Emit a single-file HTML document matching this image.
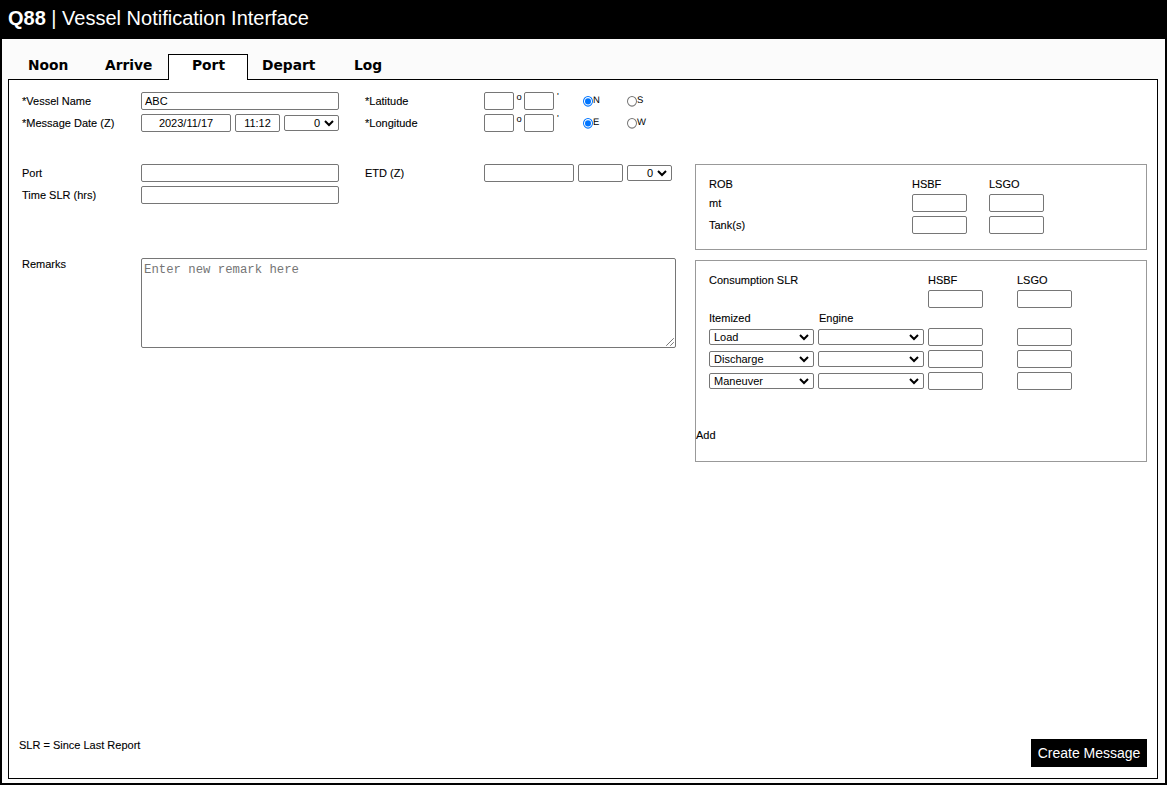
<!DOCTYPE html>
<html lang="en">
<head>
<meta charset="utf-8">
<title>Q88 | Vessel Notification Interface</title>
<style>
html,body{margin:0;padding:0;}
body{width:1167px;height:785px;background:#000;position:relative;overflow:hidden;
  font-family:"Liberation Sans",Arial,sans-serif;font-size:11px;color:#000;}
#hdr{position:absolute;left:8px;top:7px;color:#fff;font-size:20px;line-height:23px;white-space:nowrap;}
#hdr b{font-weight:bold;}
#wrap{position:absolute;left:2px;top:39px;width:1163px;height:744px;background:#fbfbfb;}
#panel{position:absolute;left:8px;top:79px;width:1150px;height:700px;background:#fff;border:1px solid #000;box-sizing:border-box;}
.tab{position:absolute;top:56px;height:18px;line-height:18px;font-family:"DejaVu Sans","Liberation Sans",sans-serif;font-weight:bold;font-size:13.8px;white-space:nowrap;}
#tabsel{position:absolute;left:168px;top:54px;width:80px;height:26px;background:#fff;border:1px solid #000;border-bottom:none;box-sizing:border-box;}
.l{position:absolute;font-size:11px;line-height:13px;white-space:nowrap;-webkit-text-stroke:0.1px #000;}
.d{position:absolute;font-size:9.33px;line-height:11px;white-space:nowrap;}
.s{position:absolute;text-rendering:geometricPrecision;font-size:9.5px;line-height:11px;white-space:nowrap;}
.t,.sel{position:absolute;box-sizing:border-box;border:1px solid #767676;border-radius:2px;background:#fff;margin:0;padding:1px 3px;
  font-family:"Liberation Sans",Arial,sans-serif;font-size:11px;line-height:14px;color:#000;height:18px;white-space:nowrap;overflow:hidden;}
.sel{padding:0;overflow:hidden;height:16px;margin-top:1px;}
.sel span{position:absolute;top:1px;font-size:11px;line-height:13px;}
.sel svg{position:absolute;right:3px;top:3px;width:12px;height:8px;}
.box{position:absolute;border:1px solid #999;box-sizing:border-box;}
.rad{position:absolute;width:10px;height:10.7px;}
#btn{position:absolute;left:1031px;top:739px;width:116px;height:28px;background:#000;color:#fff;font-size:14px;line-height:28px;text-align:center;white-space:nowrap;}
.ta{font-family:"Liberation Mono","DejaVu Sans Mono",monospace;font-size:12.3px;line-height:14px;height:90px;padding:4px 2px 2px 2px;color:#757575;}
</style>
</head>
<body>
<div id="hdr"><b>Q88</b> | Vessel Notification Interface</div>
<div id="wrap"></div>
<div id="panel"></div>
<div id="tabsel"></div>
<div class="tab" style="left:28px">Noon</div>
<div class="tab" style="left:105px">Arrive</div>
<div class="tab" style="left:192px">Port</div>
<div class="tab" style="left:262px">Depart</div>
<div class="tab" style="left:354px">Log</div>

<div class="l" style="left:22px;top:95px">*Vessel Name</div>
<div class="t" style="left:141px;top:92px;width:198px">ABC</div>
<div class="l" style="left:22px;top:117px">*Message Date (Z)</div>
<div class="t" style="left:141px;top:114px;width:90px;text-align:center">2023/11/17</div>
<div class="t" style="left:235px;top:114px;width:45px;text-align:center">11:12</div>
<div class="sel" style="left:284px;top:114px;width:55px"><span style="right:18px">0</span><svg viewBox="0 0 12 8"><path d="M2 2 L6 6 L10 2" fill="none" stroke="#000" stroke-width="2"/></svg></div>

<div class="l" style="left:365px;top:95px">*Latitude</div>
<div class="t" style="left:484px;top:92px;width:30px"></div>
<div class="d" style="left:516.5px;top:92px">o</div>
<div class="t" style="left:524px;top:92px;width:30px"></div>
<div class="d" style="left:557px;top:91px">'</div>
<svg class="rad" style="left:583px;top:96px" preserveAspectRatio="none" viewBox="0 0 10 10"><circle cx="5" cy="5" r="4.5" fill="#fff" stroke="#0075ff" stroke-width="1"/><circle cx="5" cy="5" r="3" fill="#0075ff"/></svg>
<div class="s" style="left:593px;top:95px">N</div>
<svg class="rad" style="left:627px;top:96px" preserveAspectRatio="none" viewBox="0 0 10 10"><circle cx="5" cy="5" r="4.5" fill="#fff" stroke="#767676" stroke-width="1"/></svg>
<div class="s" style="left:637px;top:95px">S</div>

<div class="l" style="left:365px;top:117px">*Longitude</div>
<div class="t" style="left:484px;top:114px;width:30px"></div>
<div class="d" style="left:516.5px;top:114px">o</div>
<div class="t" style="left:524px;top:114px;width:30px"></div>
<div class="d" style="left:557px;top:113px">'</div>
<svg class="rad" style="left:583px;top:118px" preserveAspectRatio="none" viewBox="0 0 10 10"><circle cx="5" cy="5" r="4.5" fill="#fff" stroke="#0075ff" stroke-width="1"/><circle cx="5" cy="5" r="3" fill="#0075ff"/></svg>
<div class="s" style="left:593px;top:117px">E</div>
<svg class="rad" style="left:627px;top:118px" preserveAspectRatio="none" viewBox="0 0 10 10"><circle cx="5" cy="5" r="4.5" fill="#fff" stroke="#767676" stroke-width="1"/></svg>
<div class="s" style="left:637px;top:117px">W</div>

<div class="l" style="left:22px;top:167px">Port</div>
<div class="t" style="left:141px;top:164px;width:198px"></div>
<div class="l" style="left:22px;top:189px">Time SLR (hrs)</div>
<div class="t" style="left:141px;top:186px;width:198px"></div>
<div class="l" style="left:365px;top:167px">ETD (Z)</div>
<div class="t" style="left:484px;top:164px;width:90px"></div>
<div class="t" style="left:578px;top:164px;width:45px"></div>
<div class="sel" style="left:627px;top:164px;width:45px"><span style="right:18px">0</span><svg viewBox="0 0 12 8"><path d="M2 2 L6 6 L10 2" fill="none" stroke="#000" stroke-width="2"/></svg></div>

<div class="l" style="left:22px;top:258px">Remarks</div>
<div class="t ta" style="left:141px;top:258px;width:535px"><span>Enter new remark here</span></div>
<svg style="position:absolute;left:664px;top:336px;width:11px;height:11px" viewBox="0 0 11 11"><path d="M2.2 9.8 L9.8 2.2 M6.2 9.8 L9.8 6.2" fill="none" stroke="#6a6a6a" stroke-width="0.9"/></svg>

<div class="box" style="left:695px;top:164px;width:452px;height:86px"></div>
<div class="l" style="left:709px;top:178px">ROB</div>
<div class="l" style="left:912px;top:178px">HSBF</div>
<div class="l" style="left:989px;top:178px">LSGO</div>
<div class="l" style="left:709px;top:197px">mt</div>
<div class="t" style="left:912px;top:194px;width:55px"></div>
<div class="t" style="left:989px;top:194px;width:55px"></div>
<div class="l" style="left:709px;top:219px">Tank(s)</div>
<div class="t" style="left:912px;top:216px;width:55px"></div>
<div class="t" style="left:989px;top:216px;width:55px"></div>

<div class="box" style="left:695px;top:260px;width:452px;height:202px"></div>
<div class="l" style="left:709px;top:274px">Consumption SLR</div>
<div class="l" style="left:928px;top:274px">HSBF</div>
<div class="l" style="left:1017px;top:274px">LSGO</div>
<div class="t" style="left:928px;top:290px;width:55px"></div>
<div class="t" style="left:1017px;top:290px;width:55px"></div>
<div class="l" style="left:709px;top:312px">Itemized</div>
<div class="l" style="left:819px;top:312px">Engine</div>

<div class="sel" style="left:709px;top:328px;width:105px"><span style="left:4px">Load</span><svg viewBox="0 0 12 8"><path d="M2 2 L6 6 L10 2" fill="none" stroke="#000" stroke-width="2"/></svg></div>
<div class="sel" style="left:818px;top:328px;width:106px"><svg viewBox="0 0 12 8"><path d="M2 2 L6 6 L10 2" fill="none" stroke="#000" stroke-width="2"/></svg></div>
<div class="t" style="left:928px;top:328px;width:55px"></div>
<div class="t" style="left:1017px;top:328px;width:55px"></div>

<div class="sel" style="left:709px;top:350px;width:105px"><span style="left:4px">Discharge</span><svg viewBox="0 0 12 8"><path d="M2 2 L6 6 L10 2" fill="none" stroke="#000" stroke-width="2"/></svg></div>
<div class="sel" style="left:818px;top:350px;width:106px"><svg viewBox="0 0 12 8"><path d="M2 2 L6 6 L10 2" fill="none" stroke="#000" stroke-width="2"/></svg></div>
<div class="t" style="left:928px;top:350px;width:55px"></div>
<div class="t" style="left:1017px;top:350px;width:55px"></div>

<div class="sel" style="left:709px;top:372px;width:105px"><span style="left:4px">Maneuver</span><svg viewBox="0 0 12 8"><path d="M2 2 L6 6 L10 2" fill="none" stroke="#000" stroke-width="2"/></svg></div>
<div class="sel" style="left:818px;top:372px;width:106px"><svg viewBox="0 0 12 8"><path d="M2 2 L6 6 L10 2" fill="none" stroke="#000" stroke-width="2"/></svg></div>
<div class="t" style="left:928px;top:372px;width:55px"></div>
<div class="t" style="left:1017px;top:372px;width:55px"></div>

<div class="l" style="left:696px;top:429px">Add</div>

<div class="l" style="left:19px;top:739px">SLR = Since Last Report</div>
<div id="btn">Create Message</div>
</body>
</html>
